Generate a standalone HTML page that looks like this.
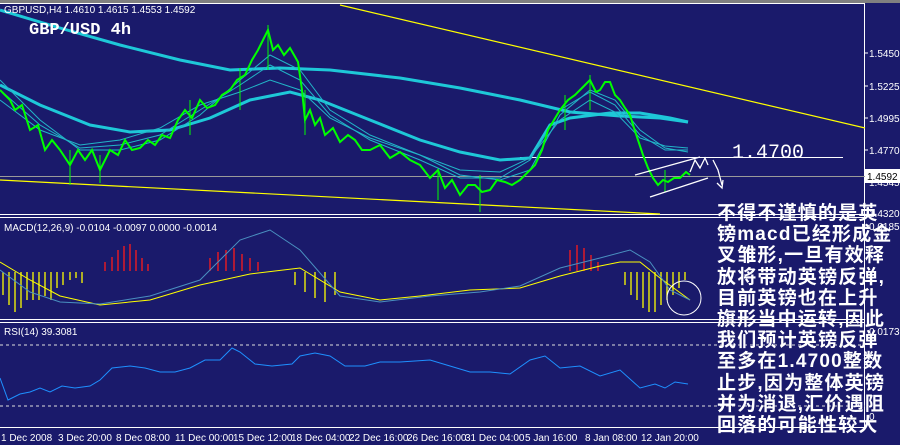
<!DOCTYPE html>
<html><head><meta charset="utf-8"><style>
html,body{margin:0;padding:0;width:900px;height:445px;overflow:hidden;background:#1a1a6b}
svg{display:block}
.t{font-family:"Liberation Sans",sans-serif;font-size:10px;fill:#fff}
.cn{position:absolute;left:717px;top:203px;width:183px;font-family:"Liberation Sans","Noto Sans CJK SC",sans-serif;font-weight:bold;font-size:19px;line-height:21.2px;color:#fff;letter-spacing:1.2px;white-space:nowrap}
</style></head><body>
<svg width="900" height="445" viewBox="0 0 900 445">
<rect x="0" y="0" width="900" height="445" fill="#1a1a6b"/>
<rect x="0" y="0" width="900" height="3" fill="#808080"/>
<line x1="0" y1="3.5" x2="865" y2="3.5" stroke="#fff"/>
<line x1="864.5" y1="3" x2="864.5" y2="428" stroke="#fff"/>
<line x1="0" y1="214.5" x2="865" y2="214.5" stroke="#fff"/>
<line x1="0" y1="217.5" x2="865" y2="217.5" stroke="#fff"/>
<line x1="0" y1="319.5" x2="865" y2="319.5" stroke="#fff"/>
<line x1="0" y1="322.5" x2="865" y2="322.5" stroke="#fff"/>
<line x1="0" y1="427.5" x2="865" y2="427.5" stroke="#fff"/>
<line x1="340" y1="5" x2="865" y2="128" stroke="#ffff00" stroke-width="1.2"/>
<line x1="0" y1="180" x2="660" y2="214" stroke="#ffff00" stroke-width="1.2"/>
<line x1="0" y1="176.5" x2="865" y2="176.5" stroke="#9a9a9a"/>
<line x1="520" y1="157.5" x2="843" y2="157.5" stroke="#fff"/>
<polyline fill="none" stroke="#1ec8d8" stroke-width="3" points="0,10 60,28 120,45 180,60 230,70 280,68 330,70 400,78 460,88 520,100 570,112 620,116 660,118 688,122"/>
<polyline fill="none" stroke="#1ec8d8" stroke-width="3" points="0,85 40,105 90,125 130,132 170,130 210,118 250,100 290,92 320,100 370,120 420,140 460,152 500,160 530,158 550,125 570,118 610,113 640,113 670,118 688,122"/>
<g fill="none" stroke="#22b5c8" stroke-width="1">
<polyline points="0,80 40,120 80,150 120,150 160,140 200,115 240,80 270,55 300,70 330,110 370,135 420,155 460,175 500,180 530,170 560,115 590,90 615,100 640,130 665,148 688,152"/>
<polyline points="0,90 40,125 80,148 120,145 160,135 200,110 240,85 270,65 300,80 330,115 370,140 420,160 460,178 500,178 530,160 560,110 590,92 615,105 640,135 665,150 688,150"/>
<polyline points="0,100 40,130 80,145 120,140 160,128 200,105 240,92 270,80 300,90 330,118 370,138 420,155 460,170 500,172 530,158 560,120 590,100 615,112 640,138 665,146 688,148"/>
</g>
<polyline fill="none" stroke="#00ff00" stroke-width="2" points="0,90 10,100 15,110 22,105 30,130 38,125 45,150 52,140 60,150 70,165 78,150 85,160 92,150 100,170 110,150 118,155 125,140 132,150 140,148 148,140 155,145 162,135 170,138 178,120 185,110 192,118 200,100 207,108 215,105 222,95 230,90 237,80 245,75 252,60 258,50 263,40 268,30 273,50 278,45 284,55 290,48 298,62 302,90 305,120 310,110 315,125 320,118 325,135 333,128 340,142 348,135 355,140 362,150 370,150 380,145 390,158 400,152 410,160 420,165 430,178 438,170 445,188 452,180 460,195 468,185 475,185 482,192 490,190 497,180 505,182 512,185 520,180 528,172 535,165 542,150 548,130 554,120 560,110 568,100 575,95 582,88 590,80 596,92 600,90 605,82 610,82 615,95 620,100 625,108 630,115 634,128 638,140 643,155 648,168 653,178 658,185 663,180 668,182 674,178 680,178 686,172 690,175"/>
<g stroke="#00ff00" stroke-width="1">
<line x1="268" y1="25" x2="268" y2="70"/><line x1="240" y1="68" x2="240" y2="110"/><line x1="190" y1="100" x2="190" y2="135"/><line x1="305" y1="90" x2="305" y2="135"/><line x1="438" y1="170" x2="438" y2="200"/><line x1="480" y1="175" x2="480" y2="212"/><line x1="590" y1="75" x2="590" y2="110"/><line x1="565" y1="95" x2="565" y2="130"/><line x1="665" y1="170" x2="665" y2="192"/><line x1="70" y1="150" x2="70" y2="185"/><line x1="100" y1="155" x2="100" y2="183"/>
</g>
<g fill="none" stroke="#fff" stroke-width="1.3">
<line x1="635" y1="175" x2="700" y2="157"/><line x1="650" y1="197" x2="708" y2="178"/>
<polyline points="690,172 695,160 700,168 705,158 708,165"/>
<polyline points="713,160 718,170 722,185"/><polyline points="717,183 722,188 723,180"/>
</g>
<text x="732" y="158" font-family="Liberation Mono,monospace" font-size="20" fill="#fff">1.4700</text>
<text x="4" y="13" class="t" font-size="9">GBPUSD,H4  1.4610 1.4615 1.4553 1.4592</text>
<text x="29" y="34" font-family="Liberation Mono,monospace" font-weight="bold" font-size="17" fill="#fff">GBP/USD 4h</text>
<g class="t" font-size="9"><text x="869" y="57">1.5450</text><text x="869" y="90">1.5225</text><text x="869" y="122">1.4995</text><text x="869" y="154">1.4770</text><text x="869" y="186">1.4545</text><text x="869" y="217">1.4320</text><text x="869" y="230">0.0185</text><text x="869" y="335">0.0173</text><text x="869" y="420">0</text></g>
<rect x="865" y="169" width="35" height="14" fill="#fff"/>
<text x="867" y="180" font-family="Liberation Sans,sans-serif" font-size="10" fill="#000">1.4592</text>
<g stroke="#fff"><line x1="864" y1="53" x2="868" y2="53"/><line x1="864" y1="86" x2="868" y2="86"/><line x1="864" y1="118" x2="868" y2="118"/><line x1="864" y1="150" x2="868" y2="150"/></g>
<text x="4" y="231" class="t" font-size="9">MACD(12,26,9) -0.0104 -0.0097 0.0000 -0.0014</text>
<g stroke="#ffff00" stroke-width="1.3">
<line x1="3" y1="272" x2="3" y2="295"/><line x1="9" y1="272" x2="9" y2="305"/><line x1="15" y1="272" x2="15" y2="312"/><line x1="21" y1="272" x2="21" y2="308"/><line x1="27" y1="272" x2="27" y2="300"/><line x1="33" y1="272" x2="33" y2="300"/><line x1="39" y1="272" x2="39" y2="300"/><line x1="45" y1="272" x2="45" y2="296"/><line x1="51" y1="272" x2="51" y2="300"/><line x1="57" y1="272" x2="57" y2="288"/><line x1="63" y1="272" x2="63" y2="285"/><line x1="70" y1="272" x2="70" y2="280"/><line x1="76" y1="272" x2="76" y2="278"/><line x1="82" y1="272" x2="82" y2="283"/>
<line x1="625" y1="272" x2="625" y2="285"/><line x1="631" y1="272" x2="631" y2="295"/><line x1="637" y1="272" x2="637" y2="300"/><line x1="643" y1="272" x2="643" y2="308"/><line x1="649" y1="272" x2="649" y2="312"/><line x1="655" y1="272" x2="655" y2="312"/><line x1="661" y1="272" x2="661" y2="305"/><line x1="667" y1="272" x2="667" y2="300"/><line x1="673" y1="272" x2="673" y2="295"/><line x1="679" y1="272" x2="679" y2="288"/><line x1="685" y1="272" x2="685" y2="280"/>
<line x1="295" y1="272" x2="295" y2="285"/><line x1="305" y1="272" x2="305" y2="292"/><line x1="315" y1="272" x2="315" y2="298"/><line x1="325" y1="272" x2="325" y2="302"/><line x1="335" y1="272" x2="335" y2="295"/>
</g>
<g stroke="#ff1a1a" stroke-width="1.3">
<line x1="105" y1="271" x2="105" y2="262"/><line x1="112" y1="271" x2="112" y2="257"/><line x1="118" y1="271" x2="118" y2="250"/><line x1="124" y1="271" x2="124" y2="246"/><line x1="130" y1="271" x2="130" y2="244"/><line x1="136" y1="271" x2="136" y2="250"/><line x1="142" y1="271" x2="142" y2="258"/><line x1="148" y1="271" x2="148" y2="264"/>
<line x1="210" y1="271" x2="210" y2="258"/><line x1="218" y1="271" x2="218" y2="252"/><line x1="226" y1="271" x2="226" y2="250"/><line x1="234" y1="271" x2="234" y2="248"/><line x1="242" y1="271" x2="242" y2="254"/><line x1="250" y1="271" x2="250" y2="258"/><line x1="258" y1="271" x2="258" y2="262"/>
<line x1="570" y1="271" x2="570" y2="250"/><line x1="577" y1="271" x2="577" y2="245"/><line x1="584" y1="271" x2="584" y2="248"/><line x1="591" y1="271" x2="591" y2="255"/><line x1="598" y1="271" x2="598" y2="262"/>
</g>
<polyline fill="none" stroke="#ffff00" stroke-width="1" points="0,262 30,280 60,296 100,305 150,300 200,285 250,274 300,268 340,292 380,300 420,296 470,290 520,288 560,276 600,266 620,262 640,262 660,278 690,300"/>
<polyline fill="none" stroke="#4a90c0" stroke-width="1" points="0,270 30,292 60,302 100,304 150,296 200,280 240,240 270,230 300,250 340,296 380,302 430,296 480,292 520,286 560,268 600,258 630,250 650,262 670,290 690,300"/>
<circle cx="684" cy="298" r="17" fill="none" stroke="#fff"/>
<text x="4" y="335" class="t" font-size="9">RSI(14) 39.3081</text>
<line x1="0" y1="345" x2="865" y2="345" stroke="#ddd" stroke-dasharray="3,3"/>
<line x1="0" y1="406" x2="865" y2="406" stroke="#ddd" stroke-dasharray="3,3"/>
<polyline fill="none" stroke="#1e90ff" stroke-width="1" points="0,378 8,400 20,394 30,392 40,388 50,392 62,386 75,388 90,386 100,380 112,368 130,366 145,368 160,372 175,372 190,368 205,360 220,360 232,348 240,352 255,364 272,366 292,364 300,356 315,353 330,356 345,366 365,366 380,362 400,362 430,360 450,366 470,372 490,372 510,374 530,360 545,356 560,368 580,366 600,376 620,370 640,388 655,384 665,388 675,382 688,384"/>
<g class="t" font-size="8"><text x="1" y="441">1 Dec 2008</text><text x="58" y="441">3 Dec 20:00</text><text x="116" y="441">8 Dec 08:00</text><text x="175" y="441">11 Dec 00:00</text><text x="233" y="441">15 Dec 12:00</text><text x="291" y="441">18 Dec 04:00</text><text x="349" y="441">22 Dec 16:00</text><text x="407" y="441">26 Dec 16:00</text><text x="465" y="441">31 Dec 04:00</text><text x="525" y="441">5 Jan 16:00</text><text x="585" y="441">8 Jan 08:00</text><text x="641" y="441">12 Jan 20:00</text></g>
</svg>
<div class="cn">不得不谨慎的是英<br>镑macd已经形成金<br>叉雏形,一旦有效释<br>放将带动英镑反弹,<br>目前英镑也在上升<br>旗形当中运转,因此<br>我们预计英镑反弹<br>至多在1.4700整数<br>止步,因为整体英镑<br>并为消退,汇价遇阻<br>回落的可能性较大</div>
</body></html>
